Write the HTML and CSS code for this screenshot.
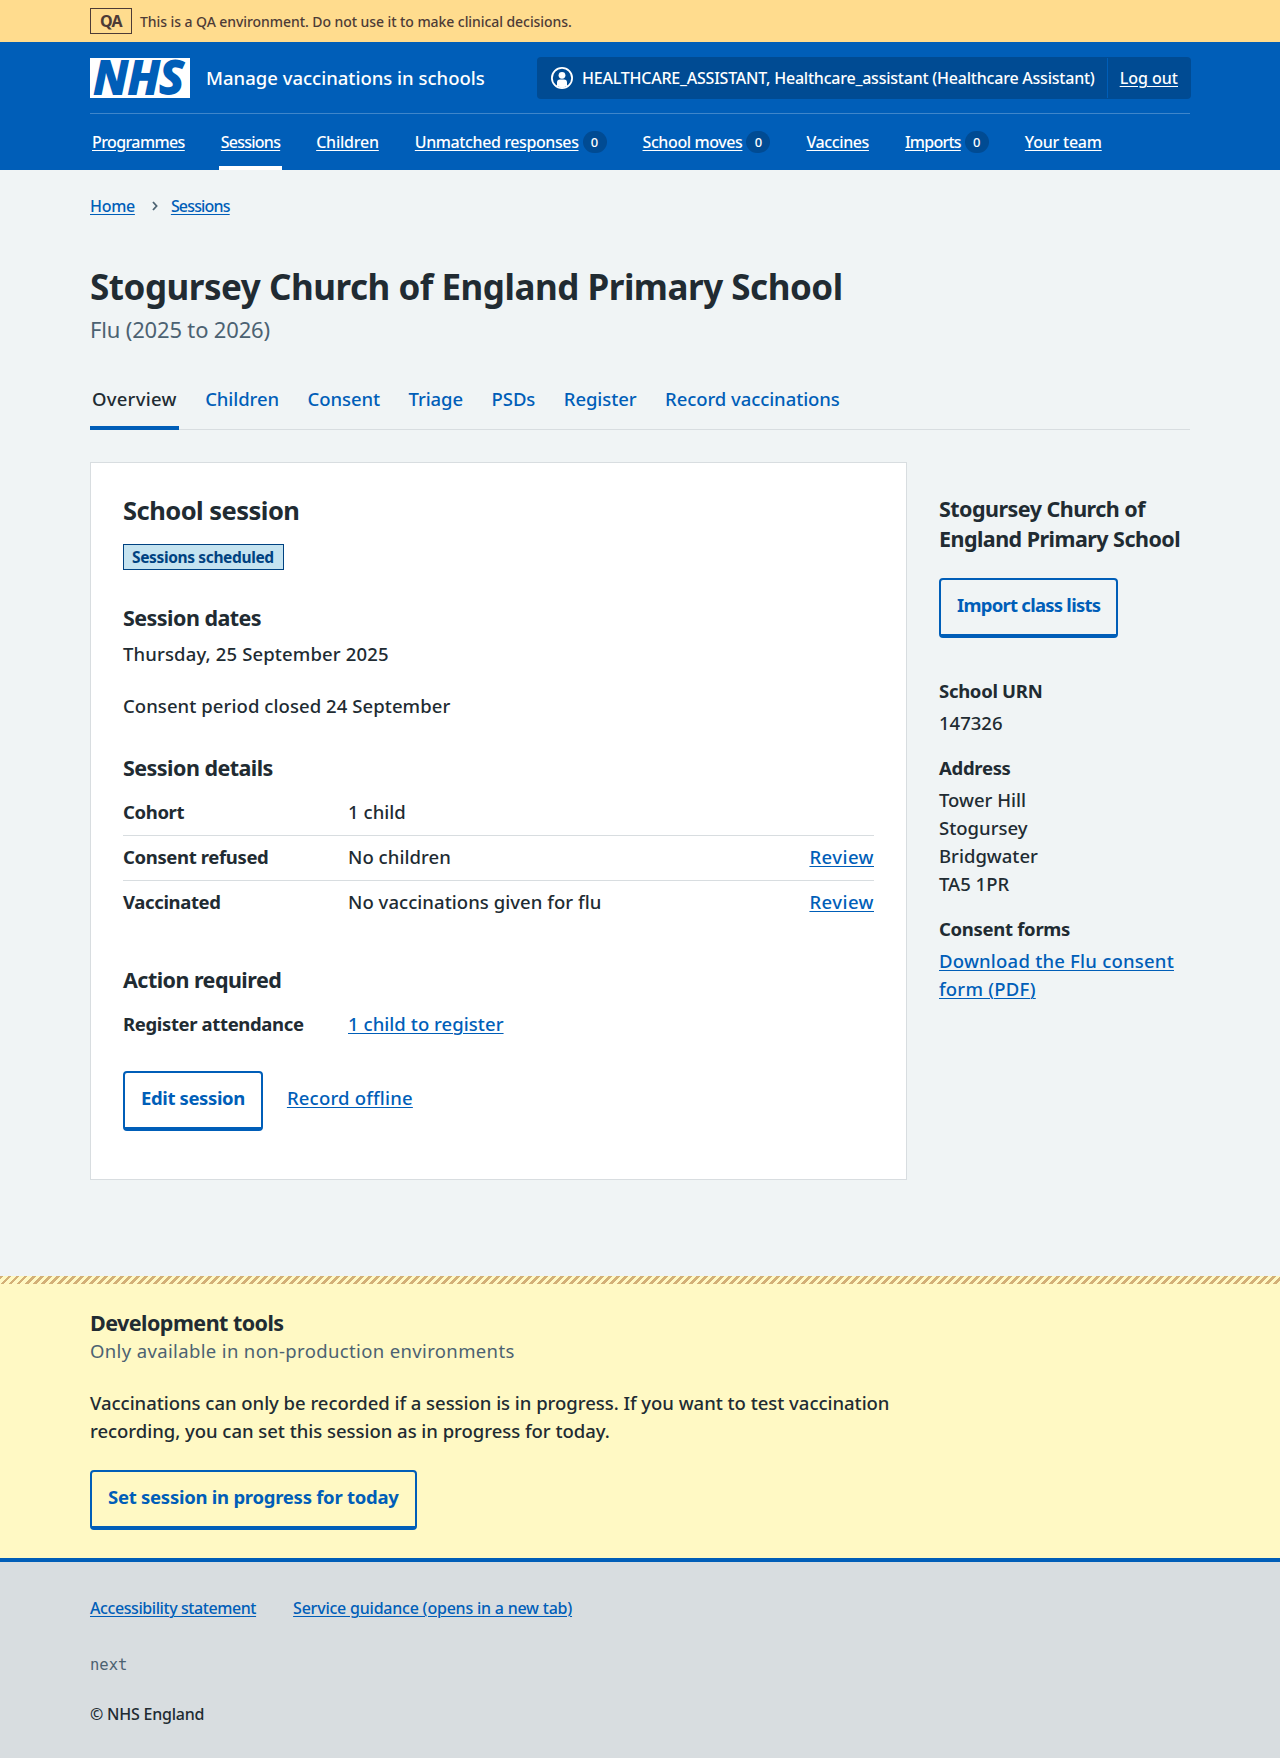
FILE: index.html
```html
<!DOCTYPE html>
<html lang="en">
<head>
<meta charset="utf-8">
<title>Stogursey Church of England Primary School – Manage vaccinations in schools</title>
<link rel="stylesheet" href="styles.css">
</head>
<body>
<div class="environment">
  <div class="container environment-inner">
    <strong class="environment-tag">QA</strong>
    <span class="environment-text">This is a QA environment. Do not use it to make clinical decisions.</span>
  </div>
</div>

<header class="header">
  <div class="container">
    <div class="header-top">
      <svg class="logo" viewBox="0 0 100 40" width="100" height="40" role="img" aria-label="NHS">
        <rect width="100" height="40" fill="#fff"/>
        <text class="logo-text" x="3.5" y="36" textLength="90" lengthAdjust="spacingAndGlyphs">NHS</text>
      </svg>
      <a class="service-name" href="#">Manage vaccinations in schools</a>
      <div class="account">
        <span class="account-user">
          <svg class="account-icon" viewBox="0 0 22 22" width="22" height="22" aria-hidden="true">
            <circle cx="11" cy="11" r="10.1" fill="none" stroke="#fff" stroke-width="1.8"/>
            <circle cx="11" cy="8.3" r="3.4" fill="#fff"/>
            <path d="M6 19v-3.4a3 3 0 0 1 3-3h4a3 3 0 0 1 3 3V19l-5 2z" fill="#fff"/>
          </svg>
          <span class="account-name">HEALTHCARE_ASSISTANT, Healthcare_assistant (Healthcare Assistant)</span>
        </span>
        <a class="account-logout" href="#">Log out</a>
      </div>
    </div>
    <nav class="nav">
      <a class="nav-item" href="#"><span class="nav-link nav-link-snug">Programmes</span></a>
      <a class="nav-item nav-item-current" href="#"><span class="nav-link nav-link-tight">Sessions</span></a>
      <a class="nav-item" href="#"><span class="nav-link nav-link-loose">Children</span></a>
      <a class="nav-item" href="#"><span class="nav-link">Unmatched responses</span><span class="count">0</span></a>
      <a class="nav-item" href="#"><span class="nav-link">School moves</span><span class="count">0</span></a>
      <a class="nav-item" href="#"><span class="nav-link">Vaccines</span></a>
      <a class="nav-item" href="#"><span class="nav-link nav-link-tight">Imports</span><span class="count">0</span></a>
      <a class="nav-item" href="#"><span class="nav-link nav-link-loose">Your team</span></a>
    </nav>
  </div>
</header>

<main class="container main">
  <nav class="breadcrumb">
    <a href="#">Home</a>
    <svg class="chevron" viewBox="0 0 6 10" width="6" height="10" aria-hidden="true"><path d="M1 1l3.6 4L1 9" fill="none" stroke="#4c6272" stroke-width="1.8"/></svg>
    <a class="breadcrumb-tight" href="#">Sessions</a>
  </nav>

  <h1 class="title">Stogursey Church of England Primary School</h1>
  <p class="caption">Flu (2025 to 2026)</p>

  <nav class="tabs">
    <a class="tab tab-current" href="#">Overview</a>
    <a class="tab" href="#">Children</a>
    <a class="tab" href="#">Consent</a>
    <a class="tab" href="#">Triage</a>
    <a class="tab" href="#">PSDs</a>
    <a class="tab" href="#">Register</a>
    <a class="tab" href="#">Record vaccinations</a>
  </nav>

  <div class="columns">
    <section class="card">
      <h2 class="heading-m">School session</h2>
      <strong class="tag">Sessions scheduled</strong>

      <h3 class="heading-s">Session dates</h3>
      <p class="session-date">Thursday, 25 September 2025</p>
      <p class="consent-period">Consent period closed 24 September</p>

      <h3 class="heading-s">Session details</h3>
      <dl class="summary">
        <div class="row"><dt>Cohort</dt><dd>1 child</dd></div>
        <div class="row"><dt>Consent refused</dt><dd>No children</dd><dd class="row-action"><a href="#">Review</a></dd></div>
        <div class="row"><dt>Vaccinated</dt><dd>No vaccinations given for flu</dd><dd class="row-action"><a href="#">Review</a></dd></div>
      </dl>

      <h3 class="heading-s heading-actions">Action required</h3>
      <dl class="summary">
        <div class="row"><dt>Register attendance</dt><dd><a href="#">1 child to register</a></dd></div>
      </dl>

      <div class="button-group">
        <a class="button" href="#">Edit session</a>
        <a class="offline" href="#">Record offline</a>
      </div>
    </section>

    <aside class="aside">
      <h2 class="heading-s">Stogursey Church of England Primary School</h2>
      <a class="button button-import" href="#">Import class lists</a>
      <dl class="facts">
        <dt>School URN</dt>
        <dd>147326</dd>
        <dt>Address</dt>
        <dd>Tower Hill<br>Stogursey<br>Bridgwater<br>TA5 1PR</dd>
        <dt>Consent forms</dt>
        <dd class="loose"><a href="#">Download the Flu consent form (PDF)</a></dd>
      </dl>
    </aside>
  </div>
</main>

<section class="devtools">
  <div class="container">
    <h2 class="heading-s">Development tools</h2>
    <p class="devtools-caption">Only available in non-production environments</p>
    <p class="devtools-text">Vaccinations can only be recorded if a session is in progress. If you want to test vaccination recording, you can set this session as in progress for today.</p>
    <a class="button" href="#">Set session in progress for today</a>
  </div>
</section>

<footer class="footer">
  <div class="container">
    <div class="footer-links">
      <a class="footer-snug" href="#">Accessibility statement</a>
      <a href="#">Service guidance (opens in a new tab)</a>
    </div>
    <p class="version">next</p>
    <p class="copyright">© NHS England</p>
  </div>
</footer>
</body>
</html>
```
FILE: styles.css
```css
* { box-sizing: border-box; }

body {
  margin: 0;
  background: #f0f4f5;
  color: #212b32;
  font: 500 18.5px/28px "Noto Sans", "Open Sans", sans-serif;
  letter-spacing: 0;
}

h1, h2, h3, p, dl, dd { margin: 0; }

a {
  color: #005eb8;
  text-decoration: underline;
  text-decoration-thickness: 1px;
  text-underline-offset: 2px;
}

.container { width: 1100px; margin: 0 auto; }
.loose { letter-spacing: 0.22px; }

/* Environment banner */
.environment {
  background: #ffdc8e;
  color: #4d3b36;
  font-size: 14px;
  line-height: 20px;
  letter-spacing: -0.07px;
}
.environment-inner { display: flex; align-items: center; gap: 8px; height: 42px; }
.environment-tag {
  width: 42px;
  height: 26px;
  border: 1px solid currentColor;
  text-align: center;
  font-size: 16px;
  font-weight: 700;
  line-height: 25px;
  letter-spacing: -0.7px;
}
.environment-text { padding-top: 2px; }

/* Header */
.header { background: #005eb8; color: #fff; }
.header a { color: #fff; }
.header-top {
  display: flex;
  align-items: center;
  height: 72px;
  border-bottom: 1px solid #3f86ca;
}
.logo { flex: none; overflow: visible; }
.logo-text {
  font: italic 700 46px "Open Sans", "Noto Sans", sans-serif;
  letter-spacing: 0;
  fill: #005eb8;
  stroke: #005eb8;
  stroke-width: 1.8;
}
.service-name { margin-left: 16px; text-decoration: none; }
.account {
  display: flex;
  height: 42px;
  margin-left: auto;
  margin-right: -1px;
  padding: 1px 0;
  border-radius: 4px;
  background: #004b93;
  font-size: 16px;
  line-height: 24px;
}
.account-user { display: flex; align-items: center; gap: 9px; padding: 0 12px 0 14px; border-right: 1px solid #005eb8; }
.account-icon { flex: none; }
.account-name { letter-spacing: -0.22px; white-space: nowrap; }
.account-logout { padding: 8px 13px 8px 12px; }

.nav { display: flex; gap: 32px; height: 56px; font-size: 16px; line-height: 24px; }
.nav-item { display: flex; align-items: center; gap: 4px; padding: 0 2px; text-decoration: none; }
.nav-item-current { box-shadow: inset 0 -4px #fff; }
.nav-link { text-decoration: underline; text-underline-offset: 2px; letter-spacing: -0.4px; }
.nav-link-snug { letter-spacing: -0.6px; }
.nav-link-tight { letter-spacing: -0.76px; }
.nav-link-loose { letter-spacing: -0.22px; }
.count {
  width: 24px;
  height: 22px;
  border-radius: 11px;
  background: #004b93;
  font-size: 13px;
  line-height: 22px;
  text-align: center;
}

/* Page title */
.main { padding: 24px 0 96px; }
.breadcrumb { display: flex; align-items: center; font-size: 16px; line-height: 24px; letter-spacing: -0.3px; }
.breadcrumb-tight { letter-spacing: -0.83px; }
.chevron { margin: 0 13px 0 17px; }
.title { margin-top: 46px; font-size: 35px; font-weight: 700; line-height: 45px; letter-spacing: -0.48px; }
.caption { margin-top: 5px; color: #4c6272; font-size: 22px; font-weight: 400; line-height: 30px; letter-spacing: -0.17px; }

/* Secondary navigation */
.tabs { display: flex; gap: 24.5px; height: 61px; margin-top: 25px; box-shadow: inset 0 -1px #d8dde0; }
.tab { padding: 16px 2px 0; text-decoration: none; letter-spacing: -0.07px; }
.tab-current { color: #212b32; letter-spacing: 0.25px; box-shadow: inset 0 -4px #005eb8; }

/* Content */
.columns { display: grid; grid-template-columns: 817px 251px; gap: 32px; margin-top: 32px; }
.card { padding: 32px 32px 48px; border: 1px solid #d8dde0; background: #fff; }
.heading-m { font-size: 25.5px; font-weight: 700; line-height: 30px; letter-spacing: -0.52px; }
.heading-s { padding-top: 1px; font-size: 21.5px; font-weight: 700; line-height: 30px; letter-spacing: -0.54px; }
.tag {
  display: block;
  width: fit-content;
  height: 26px;
  margin-top: 19px;
  padding: 0 9px 0 8px;
  border: 1px solid #004281;
  background: #c5e3f0;
  color: #004281;
  font-size: 15.5px;
  font-weight: 700;
  line-height: 24px;
  letter-spacing: -0.36px;
}
.card .heading-s { margin-top: 32px; }
.session-date { margin-top: 7px; letter-spacing: 0.14px; }
.consent-period { margin-top: 24px; letter-spacing: 0.07px; }

.summary { margin-top: 8px; }
.row { display: grid; grid-template-columns: 225px 1fr auto; padding: 7px 0 9px; border-bottom: 1px solid #d8dde0; }
.row:last-child { border-bottom-color: transparent; }
.row dt { font-weight: 700; letter-spacing: -0.36px; }
.row dd { letter-spacing: 0.05px; }
.row .row-action { letter-spacing: 0.45px; }
.card .heading-actions { margin-top: 38px; }

.button {
  display: block;
  width: fit-content;
  padding: 11px 16px 15px;
  border: 2px solid #005eb8;
  border-bottom-width: 4px;
  border-radius: 4px;
  font-weight: 700;
  letter-spacing: -0.26px;
  text-decoration: none;
}
.button-group { display: flex; align-items: center; gap: 24px; margin-top: 23px; }
.button-group .button { letter-spacing: -0.38px; }
.offline { margin-top: -6px; letter-spacing: 0.2px; }

.aside { padding-top: 31px; }
.button-import { margin-top: 24px; letter-spacing: -0.75px; }
.facts { margin-top: 39px; }
.facts dt { font-weight: 700; letter-spacing: -0.3px; }
.facts dd { margin: 4px 0 17px; }

/* Development tools */
.devtools {
  padding: 31px 0 28px;
  background:
    repeating-linear-gradient(135deg, #d3b077 0 2.828px, #fff9c4 2.828px 5.657px) top / 100% 8px no-repeat,
    #fff9c4;
}
.devtools-caption { color: #4c6272; font-weight: 400; letter-spacing: 0.36px; line-height: 26px; }
.devtools-text { width: 817px; margin: 25px 0; letter-spacing: -0.03px; }

/* Footer */
.footer { height: 200px; padding-top: 34px; border-top: 4px solid #005eb8; background: #d8dde0; font-size: 16px; line-height: 24px; letter-spacing: -0.22px; }
.footer-links { display: flex; gap: 37px; }
.footer-snug { letter-spacing: -0.42px; }
.version { margin-top: 33px; color: #4c6272; font: 400 15.5px/24px "DejaVu Sans Mono", "Liberation Mono", monospace; letter-spacing: 0; }
.copyright { margin-top: 25px; }
```
